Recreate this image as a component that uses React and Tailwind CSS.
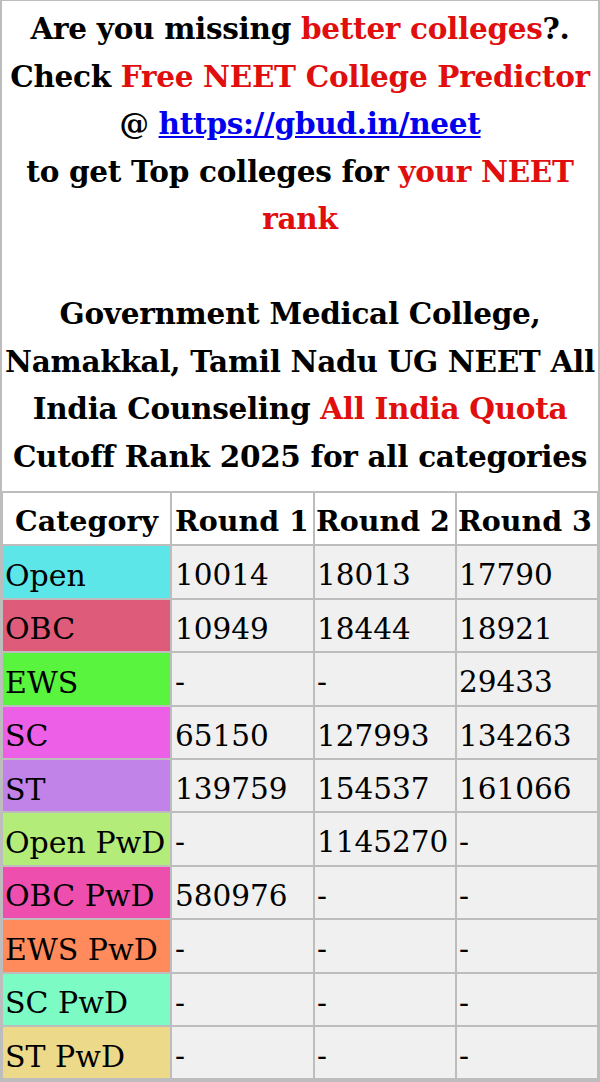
import React from "react";

const rows = [
  ["Open", "#5ce6e8", "10014", "18013", "17790"],
  ["OBC", "#de5c7a", "10949", "18444", "18921"],
  ["EWS", "#58f43e", "-", "-", "29433"],
  ["SC", "#ec5fe6", "65150", "127993", "134263"],
  ["ST", "#c183e8", "139759", "154537", "161066"],
  ["Open PwD", "#b4ec7a", "-", "1145270", "-"],
  ["OBC PwD", "#ee4fae", "580976", "-", "-"],
  ["EWS PwD", "#ff8a5c", "-", "-", "-"],
  ["SC PwD", "#7cfcc4", "-", "-", "-"],
  ["ST PwD", "#ecd98a", "-", "-", "-"],
];

export default function App() {
  const font = { fontFamily: '"DejaVu Serif", "Liberation Serif", serif' };
  return (
    <div className="w-[600px] h-[1082px] bg-[#bdbdbd] px-[2px] pt-[1px] overflow-hidden" style={font}>
      <div className="bg-white h-[490px] pt-[4px] text-center font-bold text-[29.5px] leading-[47.5px] text-black tracking-[-0.3px]">
        <div className="whitespace-nowrap">Are you missing <span className="text-[#e10e0e]">better colleges</span>?.</div>
        <div className="whitespace-nowrap">Check <span className="text-[#e10e0e]">Free NEET College Predictor</span></div>
        <div className="whitespace-nowrap">@ <a href="#" className="text-[#0000ee] underline">https://gbud.in/neet</a></div>
        <div className="whitespace-nowrap">to get Top colleges for <span className="text-[#e10e0e]">your NEET</span></div>
        <div className="whitespace-nowrap text-[#e10e0e]">rank</div>
        <div className="h-[47.5px]"></div>
        <div className="whitespace-nowrap">Government Medical College,</div>
        <div className="whitespace-nowrap -mx-[2px]">Namakkal, Tamil Nadu UG NEET All</div>
        <div className="whitespace-nowrap">India Counseling <span className="text-[#e10e0e]">All India Quota</span></div>
        <div className="whitespace-nowrap">Cutoff Rank 2025 for all categories</div>
      </div>
      <div className="grid grid-cols-[167px_141px_140px_140px] auto-rows-[51.4px] gap-[2px] px-[1px] pt-[2px] text-[29.5px] text-black">
        <div className="bg-white font-bold text-[28.5px] flex items-center justify-center pt-[6px] whitespace-nowrap">Category</div>
        <div className="bg-white font-bold text-[28.5px] flex items-center pl-[3px] pt-[6px] whitespace-nowrap">Round 1</div>
        <div className="bg-white font-bold text-[28.5px] flex items-center pl-[1px] pt-[6px] whitespace-nowrap">Round 2</div>
        <div className="bg-white font-bold text-[28.5px] flex items-center pl-[1px] pt-[6px] whitespace-nowrap">Round 3</div>
        {rows.map((r) => (
          <React.Fragment key={r[0]}>
            <div className="flex items-center pl-[2px] pt-[7px] text-[30px] whitespace-nowrap" style={{ backgroundColor: r[1] }}>{r[0]}</div>
            <div className="bg-[#f0f0f0] flex items-center pl-[3px] pt-[7px] whitespace-nowrap">{r[2]}</div>
            <div className="bg-[#f0f0f0] flex items-center pl-[2px] pt-[7px] whitespace-nowrap">{r[3]}</div>
            <div className="bg-[#f0f0f0] flex items-center pl-[2px] pt-[7px] whitespace-nowrap">{r[4]}</div>
          </React.Fragment>
        ))}
      </div>
    </div>
  );
}
